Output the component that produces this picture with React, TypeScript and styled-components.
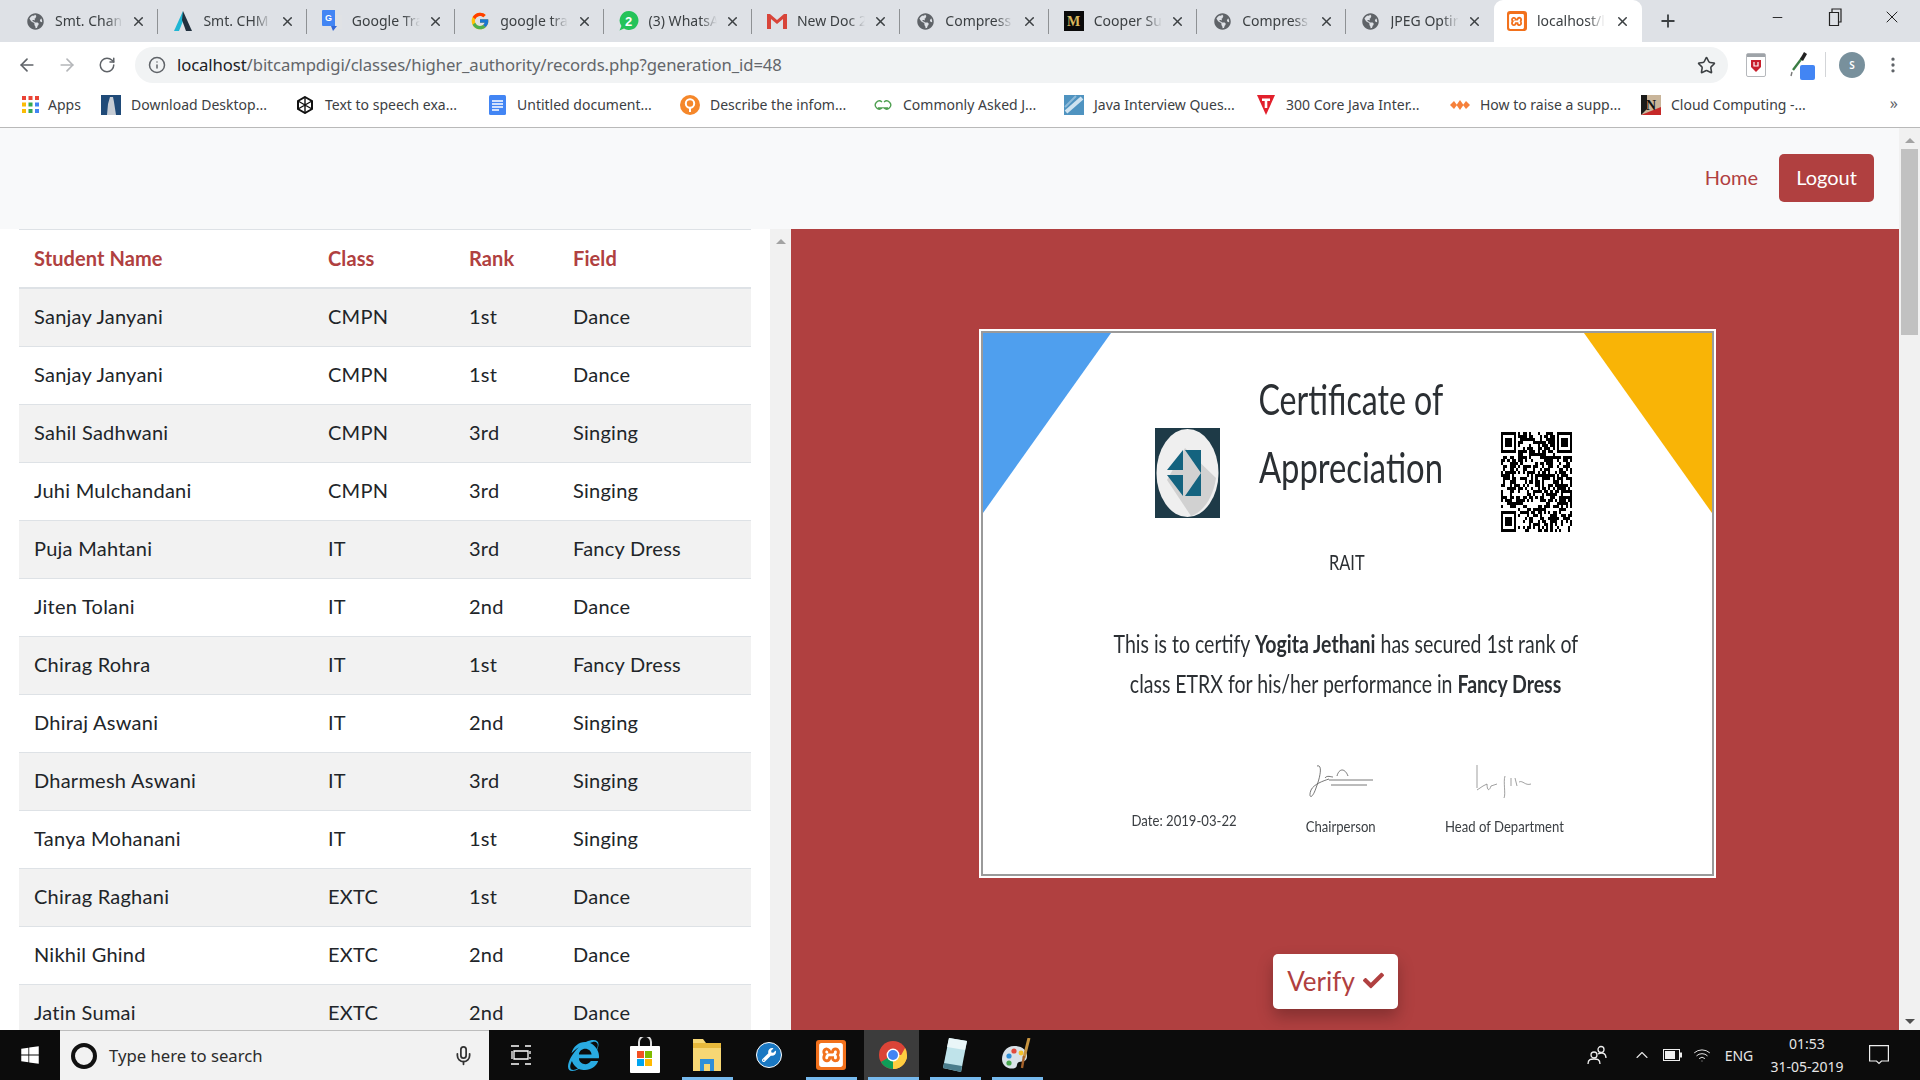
import styled, { createGlobalStyle } from "styled-components";
import { ArrowLeft, ArrowRight, RotateCw, Star, X, Plus, Minus, Mic, ChevronUp, Wifi, MoreVertical, Info } from "lucide-react";
import { FaCheck, FaGlobeAmericas, FaWindows, FaInternetExplorer, FaWrench } from "react-icons/fa";
import { FcGoogle } from "react-icons/fc";
import { SiXampp } from "react-icons/si";

const RED = "#b04040";

const GlobalStyle = createGlobalStyle`
  html, body { margin: 0; padding: 0; height: 100%; overflow: hidden; background: #fff; }
  #root { height: 100%; }
  * { box-sizing: border-box; }
`;

const Screen = styled.div`
  height: 1080px;
  width: 1920px;
  display: flex;
  flex-direction: column;
  overflow: hidden;
  font-family: Lato, "Open Sans", sans-serif;
`;

/* browser chrome */
const TabStrip = styled.div`
  height: 42px;
  flex: none;
  display: flex;
  padding-left: 10px;
  background: #dee1e6;
  font-family: "Noto Sans", sans-serif;
`;

const Tab = styled.div<{ $active?: boolean; $sep?: boolean }>`
  position: relative;
  width: 148.4px;
  flex: none;
  height: 42px;
  display: flex;
  align-items: center;
  padding: 0 12px 0 ${(p) => (p.$active ? 13 : 15)}px;
  color: #3c4043;
  font-size: 14px;
  background: ${(p) => (p.$active ? "#fff" : "transparent")};
  border-radius: ${(p) => (p.$active ? "9px 9px 0 0" : "0")};
  &::after {
    content: "";
    display: ${(p) => (p.$sep ? "block" : "none")};
    position: absolute;
    right: 0;
    top: 9px;
    height: 25px;
    width: 1px;
    background: #8e9194;
  }
`;

const TabIcon = styled.span`
  width: 20px;
  height: 20px;
  flex: none;
  display: flex;
  align-items: center;
  justify-content: center;
  color: #5f6368;
`;

const TabTitle = styled.span`
  margin: -2px 0 0 10px;
  width: 68px;
  flex: none;
  overflow: hidden;
  white-space: nowrap;
  -webkit-mask-image: linear-gradient(to right, #000 75%, transparent);
  mask-image: linear-gradient(to right, #000 75%, transparent);
`;

const TabClose = styled.span`
  margin-left: auto;
  display: flex;
  color: #3c4043;
`;

const NewTab = styled.span`
  width: 48px;
  margin-left: 2px;
  display: flex;
  align-items: center;
  justify-content: center;
  color: #3c4043;
`;

const WindowControls = styled.div`
  margin-left: auto;
  display: flex;
  height: 34px;
  color: #222;
`;

const WindowButton = styled.span`
  width: 57px;
  display: flex;
  align-items: center;
  justify-content: center;
`;

const Toolbar = styled.div`
  height: 43px;
  flex: none;
  display: flex;
  padding: 5px 0 0 7px;
  background: #fff;
  font-family: "Noto Sans", sans-serif;
`;

const NavButton = styled.span<{ $off?: boolean }>`
  width: 40px;
  height: 36px;
  flex: none;
  display: flex;
  align-items: center;
  justify-content: center;
  color: ${(p) => (p.$off ? "#b4b6b9" : "#5f6368")};
`;

const Omnibox = styled.div`
  flex: 1;
  margin-left: 8px;
  height: 36px;
  display: flex;
  align-items: center;
  padding: 0 12px 0 13px;
  border-radius: 18px;
  background: #f1f3f4;
  color: #5f6368;
`;

const Url = styled.span`
  margin: -2px 0 0 11px;
  font-size: 16.7px;
  letter-spacing: -0.1px;
  color: #63666a;
  b {
    font-weight: 400;
    color: #202124;
  }
`;

const StarCell = styled.span`
  margin-left: auto;
  display: flex;
  color: #3c4043;
`;

const ToolSlot = styled.span<{ $w: number }>`
  width: ${(p) => p.$w}px;
  height: 36px;
  flex: none;
  display: flex;
  align-items: center;
  justify-content: center;
  color: #5f6368;
`;

const ToolSep = styled.span`
  width: 1px;
  height: 25px;
  margin: 5px 13px 0 5px;
  background: #d3d5d8;
`;

const Avatar = styled.span`
  width: 26px;
  height: 26px;
  flex: none;
  margin-top: 5px;
  border-radius: 50%;
  background: #78909c;
  color: #fff;
  font-size: 10px;
  font-weight: 600;
  display: flex;
  align-items: center;
  justify-content: center;
`;

const Bookmarks = styled.div`
  height: 43px;
  flex: none;
  display: flex;
  align-items: center;
  padding: 0 0 3px 20px;
  background: #fff;
  border-bottom: 1px solid #b9b9b9;
  font-family: "Noto Sans", sans-serif;
  font-size: 14px;
  color: #3c4043;
  position: relative;
`;

const Bookmark = styled.span<{ $w: number; $gap?: number }>`
  width: ${(p) => p.$w}px;
  flex: none;
  display: flex;
  align-items: center;
  gap: ${(p) => p.$gap ?? 10}px;
  white-space: nowrap;
  overflow: hidden;
`;

const BookmarkIcon = styled.span`
  width: 20px;
  height: 20px;
  flex: none;
  display: flex;
  align-items: center;
  justify-content: center;
`;

const MoreBookmarks = styled.span`
  position: absolute;
  right: 22px;
  top: 7px;
  font-size: 16px;
  color: #5f6368;
`;

/* page */
const Viewport = styled.div`
  flex: 1;
  min-height: 0;
  display: flex;
`;

const Page = styled.div`
  flex: 1;
  min-width: 0;
  display: flex;
  flex-direction: column;
`;

const Scrollbar = styled.div<{ $w: number }>`
  width: ${(p) => p.$w}px;
  flex: none;
  display: flex;
  flex-direction: column;
  align-items: center;
  background: #f1f1f1;
`;

const Arrow = styled.span<{ $down?: boolean }>`
  width: 0;
  height: 0;
  flex: none;
  margin: ${(p) => (p.$down ? "auto 0 6px" : "10px 0 6px")};
  border-left: 5px solid transparent;
  border-right: 5px solid transparent;
  ${(p) => (p.$down ? "border-top: 5px solid #505050;" : "border-bottom: 5px solid #a3a3a3;")}
`;

const Thumb = styled.span`
  width: 17px;
  height: 186px;
  flex: none;
  background: #c1c1c1;
`;

const Navbar = styled.nav`
  height: 101px;
  flex: none;
  display: flex;
  align-items: center;
  justify-content: flex-end;
  gap: 21px;
  padding: 0 25px 1px 0;
  background: #f8f9fa;
  font-size: 20px;
`;

const HomeLink = styled.a`
  margin-top: -2px;
  color: ${RED};
`;

const LogoutButton = styled.button`
  width: 95px;
  height: 48px;
  padding: 0 0 3px;
  border: 0;
  border-radius: 5px;
  background: ${RED};
  color: #fff;
  font: inherit;
`;

const Main = styled.main`
  flex: 1;
  min-height: 0;
  display: flex;
`;

const TablePanel = styled.section`
  width: 770px;
  flex: none;
  padding: 0 19px;
  overflow: hidden;
  background: #fff;
`;

const Records = styled.table`
  width: 732px;
  table-layout: fixed;
  border-collapse: collapse;
  font-size: 20px;
  line-height: 27px;
  color: #212529;
`;

const HeadCell = styled.th<{ $w: number }>`
  width: ${(p) => p.$w}px;
  padding: 14px 15px 13px;
  height: 58px;
  text-align: left;
  font-weight: 700;
  letter-spacing: 0.1px;
  color: ${RED};
  border-top: 1px solid #dee2e6;
  border-bottom: 2px solid #dee2e6;
`;

const Row = styled.tr`
  &:nth-child(odd) {
    background: #f2f2f2;
  }
`;

const Cell = styled.td`
  padding: 14px 15px 16px;
  height: 58px;
  letter-spacing: 0.25px;
  border-bottom: 1px solid #dee2e6;
`;

const CertPanel = styled.section`
  flex: 1;
  min-width: 0;
  padding: 100px 0 0 188px;
  overflow: hidden;
  background: ${RED};
`;

const Frame = styled.div`
  position: relative;
  width: 737px;
  height: 549px;
  padding-top: 37px;
  border: 2px solid #fff;
  box-shadow: inset 0 0 0 2px #9a9a9a;
  background: #fff;
  color: #2b2f33;
  overflow: hidden;
`;

const Corner = styled.svg<{ $right?: boolean }>`
  position: absolute;
  top: 2px;
  ${(p) => (p.$right ? "right: 2px;" : "left: 2px;")}
  width: 128px;
  height: 180px;
`;

const CertHead = styled.div`
  position: relative;
  height: 166px;
  margin-top: -3px;
  padding-left: 174px;
  display: flex;
  align-items: flex-start;
`;

const CertLogo = styled.svg`
  width: 65px;
  height: 90px;
  margin-top: 63px;
  flex: none;
`;

const CertTitle = styled.div`
  width: 184px;
  margin-left: 39px;
  flex: none;
`;

/* the certificate is a picture squeezed sideways, so its text is narrowed too */
const Squeezed = styled.div<{ $size: number; $line: number; $scale: number }>`
  display: flex;
  justify-content: center;
  white-space: nowrap;
  font-size: ${(p) => p.$size}px;
  line-height: ${(p) => p.$line}px;
  & > span {
    flex: none;
    display: block;
    transform: scaleX(${(p) => p.$scale});
    b {
      font-weight: 700;
    }
  }
`;

const CertQr = styled.svg`
  width: 71px;
  height: 100px;
  margin: 67px 0 0 58px;
  flex: none;
`;

const CertOrg = styled.div`
  position: relative;
  margin: 16px 2px 0 0;
`;

const CertBody = styled.div`
  position: relative;
  margin: 46px 3px 0 0;
`;

const CertFoot = styled.div`
  position: relative;
  margin-top: 61px;
  display: grid;
  grid-template-columns: 149px 164px 163px;
  padding-left: 129px;
`;

const FootColumn = styled.div<{ $top?: number }>`
  display: flex;
  flex-direction: column;
  align-items: center;
  padding-top: ${(p) => p.$top ?? 0}px;
  color: #3a3e42;
`;

const Signature = styled.svg`
  width: 64px;
  height: 36px;
  margin-bottom: 14px;
`;

const VerifyButton = styled.button`
  width: 125px;
  height: 55px;
  margin: 76px 0 0 294px;
  padding: 0 0 2px;
  display: flex;
  align-items: center;
  justify-content: center;
  gap: 8px;
  border: 0;
  border-radius: 5px;
  background: #fff;
  color: ${RED};
  font-family: Lato, sans-serif;
  font-size: 26px;
  box-shadow: 0 8px 16px rgba(0, 0, 0, 0.25);
`;

/* taskbar */
const Taskbar = styled.footer`
  height: 50px;
  flex: none;
  display: flex;
  background: #0c0c0c;
  color: #e6e6e6;
  font-family: "Noto Sans", sans-serif;
`;

const StartCell = styled.span`
  width: 60px;
  flex: none;
  display: flex;
  align-items: center;
  justify-content: center;
  color: #fff;
`;

const SearchBox = styled.div`
  width: 429px;
  flex: none;
  display: flex;
  align-items: center;
  padding: 0 15px 0 11px;
  background: #f2f2f2;
  border-top: 1px solid #bdbdbd;
  color: #2c2c2c;
  font-size: 16.7px;
`;

const CortanaRing = styled.span`
  width: 26px;
  height: 26px;
  flex: none;
  border: 4px solid #111;
  border-radius: 50%;
`;

const SearchText = styled.span`
  margin-left: 12px;
`;

const SearchMic = styled.span`
  margin-left: auto;
  display: flex;
  color: #333;
`;

const TaskSlot = styled.span<{ $w?: number; $active?: boolean; $open?: boolean }>`
  position: relative;
  width: ${(p) => p.$w ?? 62}px;
  flex: none;
  display: flex;
  align-items: center;
  justify-content: center;
  &::before {
    content: "";
    display: ${(p) => (p.$active ? "block" : "none")};
    position: absolute;
    inset: 0 5px 0 2px;
    background: #3c3c3c;
  }
  &::after {
    content: "";
    display: ${(p) => (p.$open ? "block" : "none")};
    position: absolute;
    left: 6px;
    right: 5px;
    bottom: 0;
    height: 3px;
    background: #76b9ed;
  }
  & > * {
    position: relative;
  }
`;

const Tray = styled.div`
  margin-left: auto;
  padding-right: 20px;
  display: flex;
`;

const TrayCell = styled.span<{ $w: number }>`
  width: ${(p) => p.$w}px;
  flex: none;
  display: flex;
  align-items: center;
  justify-content: center;
  font-size: 14px;
`;

const Clock = styled.span`
  display: flex;
  flex-direction: column;
  align-items: center;
  font-size: 14px;
  line-height: 23px;
`;

const XamppTile = styled.span<{ $size: number }>`
  width: ${(p) => p.$size}px;
  height: ${(p) => p.$size}px;
  display: flex;
  align-items: center;
  justify-content: center;
  border-radius: 3px;
  background: #f2711c;
  color: #fff;
`;

const WrenchBadge = styled.span`
  width: 26px;
  height: 26px;
  display: flex;
  align-items: center;
  justify-content: center;
  border-radius: 50%;
  border: 1px solid #fff;
  background: #1a78c2;
  color: #fff;
`;

/* little drawings */
const Globe = () => <FaGlobeAmericas size={17} />;

const TriangleA = () => (
  <svg width="20" height="22" viewBox="0 0 20 22">
    <path d="M10 1 L1 21 H6 L10 11 Z" fill="#1fb6d4" />
    <path d="M10 1 L19 21 H13 L9 10 Z" fill="#22313f" />
  </svg>
);

const TranslateIcon = () => (
  <svg width="20" height="22" viewBox="0 0 20 22">
    <rect x="8" y="5" width="12" height="14" rx="1" fill="#e0e2e5" />
    <path d="M1 0 H13 V16 H1 a1 1 0 0 1 -1 -1 V1 a1 1 0 0 1 1 -1 Z" fill="#4285f4" />
    <path d="M9 16 L11 21 L15 16 Z" fill="#3367d6" />
    <text x="3" y="11" fontSize="9" fontWeight="700" fill="#fff" fontFamily="Liberation Sans">G</text>
  </svg>
);

const WhatsappIcon = () => (
  <svg width="20" height="20" viewBox="0 0 20 20">
    <path d="M10 0 a9.5 9.5 0 1 1 -5 17.6 L0.5 19.5 L2.4 15 A9.5 9.5 0 0 1 10 0 Z" fill="#25c35a" />
    <text x="6" y="14.5" fontSize="13" fontWeight="700" fill="#fff" fontFamily="Liberation Sans">2</text>
  </svg>
);

const GmailIcon = () => (
  <svg width="20" height="16" viewBox="0 0 20 16">
    <path d="M0 1 H3 L10 7 L17 1 H20 V16 H16 V6 L10 11 L4 6 V16 H0 Z" fill="#d8453a" />
  </svg>
);

const CooperIcon = () => (
  <svg width="20" height="20" viewBox="0 0 20 20">
    <rect width="20" height="20" fill="#0a0a0a" />
    <text x="3" y="15" fontSize="14" fontWeight="700" fill="#d8b65c" fontFamily="Liberation Serif">M</text>
  </svg>
);

const AppsGrid = () => (
  <svg width="17" height="17" viewBox="0 0 17 17">
    {["#ea4335", "#ea4335", "#ea4335", "#fbbc05", "#34a853", "#4285f4", "#fbbc05", "#34a853", "#4285f4"].map((c, i) => (
      <rect key={i} x={(i % 3) * 6.5} y={Math.floor(i / 3) * 6.5} width="4" height="4" fill={c} />
    ))}
  </svg>
);

const StatueIcon = () => (
  <svg width="20" height="20" viewBox="0 0 20 20">
    <rect width="20" height="20" fill="#1f4a78" />
    <path d="M9 2 h3 l1 5 l2 13 H6 l1 -11 Z" fill="#c6ccd4" />
  </svg>
);

const HexIcon = () => (
  <svg width="18" height="18" viewBox="0 0 18 18">
    <path d="M9 1 L16 5 V13 L9 17 L2 13 V5 Z" fill="none" stroke="#111" strokeWidth="2" />
    <path d="M9 1 V17 M2 5 L16 13 M16 5 L2 13" stroke="#111" strokeWidth="1.4" />
  </svg>
);

const DocsIcon = () => (
  <svg width="17" height="20" viewBox="0 0 17 20">
    <rect width="17" height="20" rx="1.5" fill="#4285f4" />
    <path d="M3 6 H14 M3 9 H14 M3 12 H14 M3 15 H10" stroke="#fff" strokeWidth="1.3" />
  </svg>
);

const QuestionIcon = () => (
  <svg width="20" height="20" viewBox="0 0 20 20">
    <circle cx="10" cy="10" r="10" fill="#f5872a" />
    <circle cx="10" cy="8.5" r="4.2" fill="none" stroke="#fff" strokeWidth="2" />
    <path d="M10 12 V17" stroke="#fff" strokeWidth="2" />
  </svg>
);

const GfgIcon = () => (
  <svg width="20" height="12" viewBox="0 0 20 12">
    <path d="M9 3 A4 4 0 1 0 9 9 H5 M11 3 A4 4 0 1 1 11 9 H15" fill="none" stroke="#4d9e4f" strokeWidth="1.3" />
  </svg>
);

const DocBadge = () => (
  <svg width="20" height="20" viewBox="0 0 20 20">
    <rect width="20" height="20" fill="#4f93c0" />
    <path d="M2 17 L18 3" stroke="#cfe3f0" strokeWidth="4" />
    <path d="M1 12 L12 1" stroke="#8fbbd8" strokeWidth="2" />
  </svg>
);

const RedT = () => (
  <svg width="20" height="22" viewBox="0 0 20 22">
    <path d="M1 1 H19 L10 21 Z" fill="#e2202c" />
    <path d="M6 4.5 H14 V7 H11.3 V14 H8.7 V7 H6 Z" fill="#fff" />
  </svg>
);

const OrangeDiamonds = () => (
  <svg width="20" height="12" viewBox="0 0 20 12">
    <path d="M0 6 L4 2 L7 6 L4 10 Z M6.5 6 L10 1 L13.5 6 L10 11 Z M13 6 L16 2 L20 6 L16 10 Z" fill="#f6803a" />
  </svg>
);

const NotionIcon = () => (
  <svg width="20" height="20" viewBox="0 0 20 20">
    <rect width="20" height="20" fill="#c9b59a" />
    <path d="M0 20 V0 H6 V14 Z" fill="#1a1a1a" />
    <path d="M0 20 L20 12 V20 Z" fill="#c62828" />
    <text x="5" y="15" fontSize="14" fontWeight="700" fill="#111" fontFamily="Liberation Serif">N</text>
  </svg>
);

const Dropper = () => (
  <svg width="26" height="30" viewBox="0 0 26 30">
    <path d="M4 20 L13 8" stroke="#3a7d44" strokeWidth="2.4" />
    <path d="M11 9 L15 2 L18 4 L14 11 Z" fill="#222" />
    <path d="M3 22 L2 26" stroke="#777" strokeWidth="1.4" />
    <rect x="11" y="15" width="15" height="15" rx="2" fill="#4285f4" />
  </svg>
);

const ShieldExt = () => (
  <svg width="20" height="24" viewBox="0 0 20 24">
    <rect x="0.5" y="0.5" width="19" height="23" rx="1.5" fill="#fff" stroke="#b5b8bc" />
    <rect x="1" y="1" width="18" height="3" fill="#9ea3a8" />
    <path d="M5 7 H15 V14 L10 19 L5 14 Z" fill="#c8202c" />
    <path d="M8 9 V13 H12 V9" fill="none" stroke="#fff" strokeWidth="1.2" />
  </svg>
);

const RestoreIcon = () => (
  <svg width="14" height="20" viewBox="0 0 14 20">
    <path d="M1.5 5.5 H10.5 V18.5 H1.5 Z M4 5 V2 H13 V15 H11" fill="none" stroke="#222" strokeWidth="1.2" />
  </svg>
);

const QR_SIZE = 33;

// pseudo random modules with three finder squares, stretched like the picture
function qrPath() {
  const cells: string[] = [];
  let seed = 48;
  const inFinder = (x: number, y: number) =>
    (x < 8 && y < 8) || (x >= QR_SIZE - 8 && y < 8) || (x < 8 && y >= QR_SIZE - 8);
  for (let y = 0; y < QR_SIZE; y++) {
    for (let x = 0; x < QR_SIZE; x++) {
      seed = (seed * 1103515245 + 12345) & 0x7fffffff;
      if (!inFinder(x, y) && (seed >> 16) % 100 < 52) cells.push(`M${x} ${y}h1v1h-1z`);
    }
  }
  return cells.join("");
}

const Finder = ({ x, y }: { x: number; y: number }) => (
  <>
    <rect x={x + 0.5} y={y + 0.5} width="6" height="6" fill="none" stroke="#000" />
    <rect x={x + 2} y={y + 2} width="3" height="3" fill="#000" />
  </>
);

const Chrome = () => (
  <svg width="28" height="28" viewBox="0 0 28 28">
    <circle cx="14" cy="14" r="14" fill="#db4437" />
    <path d="M14 14 L1.9 21 A14 14 0 0 0 14 28 L20 14 Z" fill="#0f9d58" />
    <path d="M14 14 H28 A14 14 0 0 1 14 28 Z" fill="#ffcd40" />
    <path d="M26.1 7 A14 14 0 0 1 28 14 A14 14 0 0 1 14 28 L21 16 Z" fill="#ffcd40" />
    <circle cx="14" cy="14" r="6.4" fill="#fff" />
    <circle cx="14" cy="14" r="5" fill="#4285f4" />
  </svg>
);

const StoreBag = () => (
  <svg width="30" height="36" viewBox="0 0 30 36">
    <path d="M9 10 V5 a6 6 0 0 1 12 0 V10" fill="none" stroke="#ddd" strokeWidth="2" />
    <rect y="9" width="30" height="27" rx="1" fill="#fff" />
    <rect x="7" y="14" width="7" height="7" fill="#f25022" />
    <rect x="15" y="14" width="7" height="7" fill="#7fba00" />
    <rect x="7" y="22" width="7" height="7" fill="#00a4ef" />
    <rect x="15" y="22" width="7" height="7" fill="#ffb900" />
  </svg>
);

const FolderIcon = () => (
  <svg width="28" height="32" viewBox="0 0 28 32">
    <path d="M0 0 H10 L13 4 H28 V32 H0 Z" fill="#f7d774" />
    <rect x="0" y="4" width="28" height="5" fill="#e8b93c" />
    <path d="M7 32 V20 H21 V32 H17 V25 H11 V32 Z" fill="#2f8fd8" />
  </svg>
);

const NoteIcon = () => (
  <svg width="24" height="34" viewBox="0 0 24 34">
    <path d="M6 0 L24 3 L18 34 L0 30 Z" fill="#bfe3ea" />
    <path d="M6 0 L24 3 L22 12 L4 9 Z" fill="#eaf6f8" />
    <path d="M0 30 L18 34 L19 28 L1 25 Z" fill="#4a7d8c" />
  </svg>
);

const PaletteIcon = () => (
  <svg width="30" height="34" viewBox="0 0 30 34">
    <path d="M12 8 C4 8 0 15 0 21 C0 29 8 32 13 30 C16 29 14 25 17 24 C21 23 25 24 25 18 C25 12 20 8 12 8 Z" fill="#d9e2e8" />
    <circle cx="7" cy="18" r="2.6" fill="#2f8fd8" />
    <circle cx="12" cy="13" r="2.6" fill="#e24a3b" />
    <circle cx="7" cy="25" r="2.6" fill="#48a84e" />
    <circle cx="19" cy="15" r="2.4" fill="#f4c22b" />
    <path d="M27 0 L22 20" stroke="#c79440" strokeWidth="3" />
    <path d="M22 18 L20 30" stroke="#a5622a" strokeWidth="2.4" />
  </svg>
);

const TaskViewIcon = () => (
  <svg width="20" height="20" viewBox="0 0 20 20" fill="none" stroke="#fff" strokeWidth="1.3">
    <path d="M0 1 H8 M14 1 H20 M3 6 H17 V14 H3 Z M0 19 H8 M14 19 H20 M19 6 V9 M19 12 V14 M1 6 V14" />
  </svg>
);

const PeopleIcon = () => (
  <svg width="20" height="20" viewBox="0 0 20 20" fill="none" stroke="#eee" strokeWidth="1.3">
    <circle cx="7" cy="10" r="3" />
    <path d="M1 19 C1 14 4 14 7 14 C10 14 13 14 13 19" />
    <circle cx="14" cy="4.5" r="3" />
    <path d="M11 9 C15 7 19 8 19 13" />
  </svg>
);

const BatteryIcon = () => (
  <svg width="19" height="12" viewBox="0 0 19 12">
    <rect x="0.5" y="0.5" width="16" height="11" fill="none" stroke="#eee" />
    <rect x="2" y="2" width="10" height="8" fill="#eee" />
    <rect x="17" y="3.5" width="2" height="5" fill="#eee" />
  </svg>
);

const NoticeIcon = () => (
  <svg width="20" height="20" viewBox="0 0 20 20" fill="none" stroke="#eee" strokeWidth="1.2">
    <path d="M0.6 0.6 H19.4 V16 H12.5 L10 18.5 L7.5 16 H0.6 Z" />
  </svg>
);

const LogoMark = () => (
  <CertLogo viewBox="0 0 65 90">
    <rect width="65" height="90" fill="#1e3a47" />
    <ellipse cx="32.5" cy="45" rx="31" ry="44" fill="#efefef" />
    <path d="M30 20 L61 50 C58 70 48 84 36 88 L12 52 Z" fill="#c4c4c4" opacity="0.7" />
    <path d="M28 22 V42 H12 Z M12 47 H28 L28 68 Z" fill="#14637f" />
    <path d="M30 22 H46 V68 H30 L46 45 Z" fill="#14637f" />
  </CertLogo>
);

const tabs = [
  { title: "Smt. Chan", icon: <Globe /> },
  { title: "Smt. CHM", icon: <TriangleA /> },
  { title: "Google Tra", icon: <TranslateIcon /> },
  { title: "google tra", icon: <FcGoogle size={20} /> },
  { title: "(3) WhatsA", icon: <WhatsappIcon /> },
  { title: "New Doc 2", icon: <GmailIcon /> },
  { title: "Compress", icon: <Globe /> },
  { title: "Cooper Su", icon: <CooperIcon /> },
  { title: "Compress", icon: <Globe /> },
  { title: "JPEG Optir", icon: <Globe /> },
];

const bookmarks = [
  { w: 194, label: "Download Desktop...", icon: <StatueIcon /> },
  { w: 192, label: "Text to speech exa...", icon: <HexIcon /> },
  { w: 193, label: "Untitled document...", icon: <DocsIcon /> },
  { w: 193, label: "Describe the infom...", icon: <QuestionIcon /> },
  { w: 191, label: "Commonly Asked J...", icon: <GfgIcon /> },
  { w: 192, label: "Java Interview Ques...", icon: <DocBadge /> },
  { w: 194, label: "300 Core Java Inter...", icon: <RedT /> },
  { w: 191, label: "How to raise a supp...", icon: <OrangeDiamonds /> },
  { w: 180, label: "Cloud Computing -...", icon: <NotionIcon /> },
];

const records = [
  ["Sanjay Janyani", "CMPN", "1st", "Dance"],
  ["Sanjay Janyani", "CMPN", "1st", "Dance"],
  ["Sahil Sadhwani", "CMPN", "3rd", "Singing"],
  ["Juhi Mulchandani", "CMPN", "3rd", "Singing"],
  ["Puja Mahtani", "IT", "3rd", "Fancy Dress"],
  ["Jiten Tolani", "IT", "2nd", "Dance"],
  ["Chirag Rohra", "IT", "1st", "Fancy Dress"],
  ["Dhiraj Aswani", "IT", "2nd", "Singing"],
  ["Dharmesh Aswani", "IT", "3rd", "Singing"],
  ["Tanya Mohanani", "IT", "1st", "Singing"],
  ["Chirag Raghani", "EXTC", "1st", "Dance"],
  ["Nikhil Ghind", "EXTC", "2nd", "Dance"],
  ["Jatin Sumai", "EXTC", "2nd", "Dance"],
];

export default function App() {
  return (
    <Screen>
      <GlobalStyle />
      <TabStrip>
        {tabs.map((t, i) => (
          <Tab key={i} $sep={i < 9}>
            <TabIcon>{t.icon}</TabIcon>
            <TabTitle>{t.title}</TabTitle>
            <TabClose><X size={15} strokeWidth={2.4} /></TabClose>
          </Tab>
        ))}
        <Tab $active>
          <TabIcon><XamppTile $size={20}><SiXampp size={15} /></XamppTile></TabIcon>
          <TabTitle>localhost/l</TabTitle>
          <TabClose><X size={15} strokeWidth={2.4} /></TabClose>
        </Tab>
        <NewTab><Plus size={20} strokeWidth={2.2} /></NewTab>
        <WindowControls>
          <WindowButton><Minus size={15} strokeWidth={1.5} /></WindowButton>
          <WindowButton><RestoreIcon /></WindowButton>
          <WindowButton><X size={20} strokeWidth={1.2} /></WindowButton>
        </WindowControls>
      </TabStrip>

      <Toolbar>
        <NavButton><ArrowLeft size={20} /></NavButton>
        <NavButton $off><ArrowRight size={20} /></NavButton>
        <NavButton><RotateCw size={18} /></NavButton>
        <Omnibox>
          <Info size={18} />
          <Url><b>localhost</b>/bitcampdigi/classes/higher_authority/records.php?generation_id=48</Url>
          <StarCell><Star size={19} /></StarCell>
        </Omnibox>
        <ToolSlot $w={56}><ShieldExt /></ToolSlot>
        <ToolSlot $w={36}><Dropper /></ToolSlot>
        <ToolSep />
        <Avatar>S</Avatar>
        <ToolSlot $w={55}><MoreVertical size={20} /></ToolSlot>
      </Toolbar>

      <Bookmarks>
        <Bookmark $w={81} $gap={8}>
          <BookmarkIcon><AppsGrid /></BookmarkIcon>
          Apps
        </Bookmark>
        {bookmarks.map((b) => (
          <Bookmark key={b.label} $w={b.w}>
            <BookmarkIcon>{b.icon}</BookmarkIcon>
            {b.label}
          </Bookmark>
        ))}
        <MoreBookmarks>»</MoreBookmarks>
      </Bookmarks>

      <Viewport>
        <Page>
          <Navbar>
            <HomeLink>Home</HomeLink>
            <LogoutButton>Logout</LogoutButton>
          </Navbar>
          <Main>
            <TablePanel>
              <Records>
                <thead>
                  <tr>
                    <HeadCell $w={294}>Student Name</HeadCell>
                    <HeadCell $w={141}>Class</HeadCell>
                    <HeadCell $w={104}>Rank</HeadCell>
                    <HeadCell $w={193}>Field</HeadCell>
                  </tr>
                </thead>
                <tbody>
                  {records.map((r, i) => (
                    <Row key={i}>
                      {r.map((c, j) => (
                        <Cell key={j}>{c}</Cell>
                      ))}
                    </Row>
                  ))}
                </tbody>
              </Records>
            </TablePanel>
            <Scrollbar $w={21}>
              <Arrow />
            </Scrollbar>
            <CertPanel>
              <Frame>
                <Corner viewBox="0 0 128 180">
                  <path d="M0 0 H128 L0 180 Z" fill="#4f9fee" />
                </Corner>
                <Corner $right viewBox="0 0 128 180">
                  <path d="M0 0 H128 V180 Z" fill="#f9b406" />
                </Corner>
                <CertHead>
                  <LogoMark />
                  <CertTitle>
                    <Squeezed $size={42} $line={68} $scale={0.765}><span>Certificate of</span></Squeezed>
                    <Squeezed $size={42} $line={68} $scale={0.78}><span>Appreciation</span></Squeezed>
                  </CertTitle>
                  <CertQr viewBox={`0 0 ${QR_SIZE} ${QR_SIZE}`} preserveAspectRatio="none" shapeRendering="crispEdges">
                    <path d={qrPath()} fill="#000" />
                    <Finder x={0} y={0} />
                    <Finder x={QR_SIZE - 7} y={0} />
                    <Finder x={0} y={QR_SIZE - 7} />
                  </CertQr>
                </CertHead>
                <CertOrg>
                  <Squeezed $size={21} $line={30} $scale={0.78}><span>RAIT</span></Squeezed>
                </CertOrg>
                <CertBody>
                  <Squeezed $size={25} $line={40} $scale={0.78}>
                    <span>This is to certify <b>Yogita Jethani</b> has secured 1st rank of</span>
                  </Squeezed>
                  <Squeezed $size={25} $line={40} $scale={0.78}>
                    <span>class ETRX for his/her performance in <b>Fancy Dress</b></span>
                  </Squeezed>
                </CertBody>
                <CertFoot>
                  <FootColumn $top={44}>
                    <Squeezed $size={16} $line={24} $scale={0.82}><span>Date: 2019-03-22</span></Squeezed>
                  </FootColumn>
                  <FootColumn>
                    <Signature viewBox="0 0 64 36" fill="none" stroke="#555" strokeWidth="0.8">
                      <path d="M8 2 C14 0 11 14 7 24 C3 36 -1 34 2 26 C5 20 14 17 20 15 M16 14 C18 11 22 13 24 13 M28 12 C30 4 36 4 39 12 M20 16 H64 M22 21 H58" />
                    </Signature>
                    <Squeezed $size={16} $line={24} $scale={0.82}><span>Chairperson</span></Squeezed>
                  </FootColumn>
                  <FootColumn>
                    <Signature viewBox="0 0 64 36" fill="none" stroke="#777" strokeWidth="0.7">
                      <path d="M4 1 V24 M4 26 L10 22 L14 20 C14 26 16 28 18 22 L24 20 M32 12 C30 18 33 30 31 34 M38 14 V22 M42 14 L44 22 M46 18 C50 16 52 22 58 20" />
                    </Signature>
                    <Squeezed $size={16} $line={24} $scale={0.82}><span>Head of Department</span></Squeezed>
                  </FootColumn>
                </CertFoot>
              </Frame>
              <VerifyButton>
                Verify <FaCheck size={21} />
              </VerifyButton>
            </CertPanel>
          </Main>
        </Page>
        <Scrollbar $w={21}>
          <Arrow />
          <Thumb />
          <Arrow $down />
        </Scrollbar>
      </Viewport>

      <Taskbar>
        <StartCell><FaWindows size={20} /></StartCell>
        <SearchBox>
          <CortanaRing />
          <SearchText>Type here to search</SearchText>
          <SearchMic><Mic size={21} /></SearchMic>
        </SearchBox>
        <TaskSlot $w={63}><TaskViewIcon /></TaskSlot>
        <TaskSlot><FaInternetExplorer size={31} color="#29abe2" /></TaskSlot>
        <TaskSlot><StoreBag /></TaskSlot>
        <TaskSlot $open><FolderIcon /></TaskSlot>
        <TaskSlot><WrenchBadge><FaWrench size={14} /></WrenchBadge></TaskSlot>
        <TaskSlot $open><XamppTile $size={30}><SiXampp size={24} /></XamppTile></TaskSlot>
        <TaskSlot $open $active><Chrome /></TaskSlot>
        <TaskSlot $open><NoteIcon /></TaskSlot>
        <TaskSlot $open><PaletteIcon /></TaskSlot>
        <Tray>
          <TrayCell $w={50}><PeopleIcon /></TrayCell>
          <TrayCell $w={40}><ChevronUp size={20} strokeWidth={1.3} /></TrayCell>
          <TrayCell $w={20}><BatteryIcon /></TrayCell>
          <TrayCell $w={40}><Wifi size={18} strokeWidth={1.3} /></TrayCell>
          <TrayCell $w={34}>ENG</TrayCell>
          <TrayCell $w={102}>
            <Clock>
              <span>01:53</span>
              <span>31-05-2019</span>
            </Clock>
          </TrayCell>
          <TrayCell $w={42}><NoticeIcon /></TrayCell>
        </Tray>
      </Taskbar>
    </Screen>
  );
}
